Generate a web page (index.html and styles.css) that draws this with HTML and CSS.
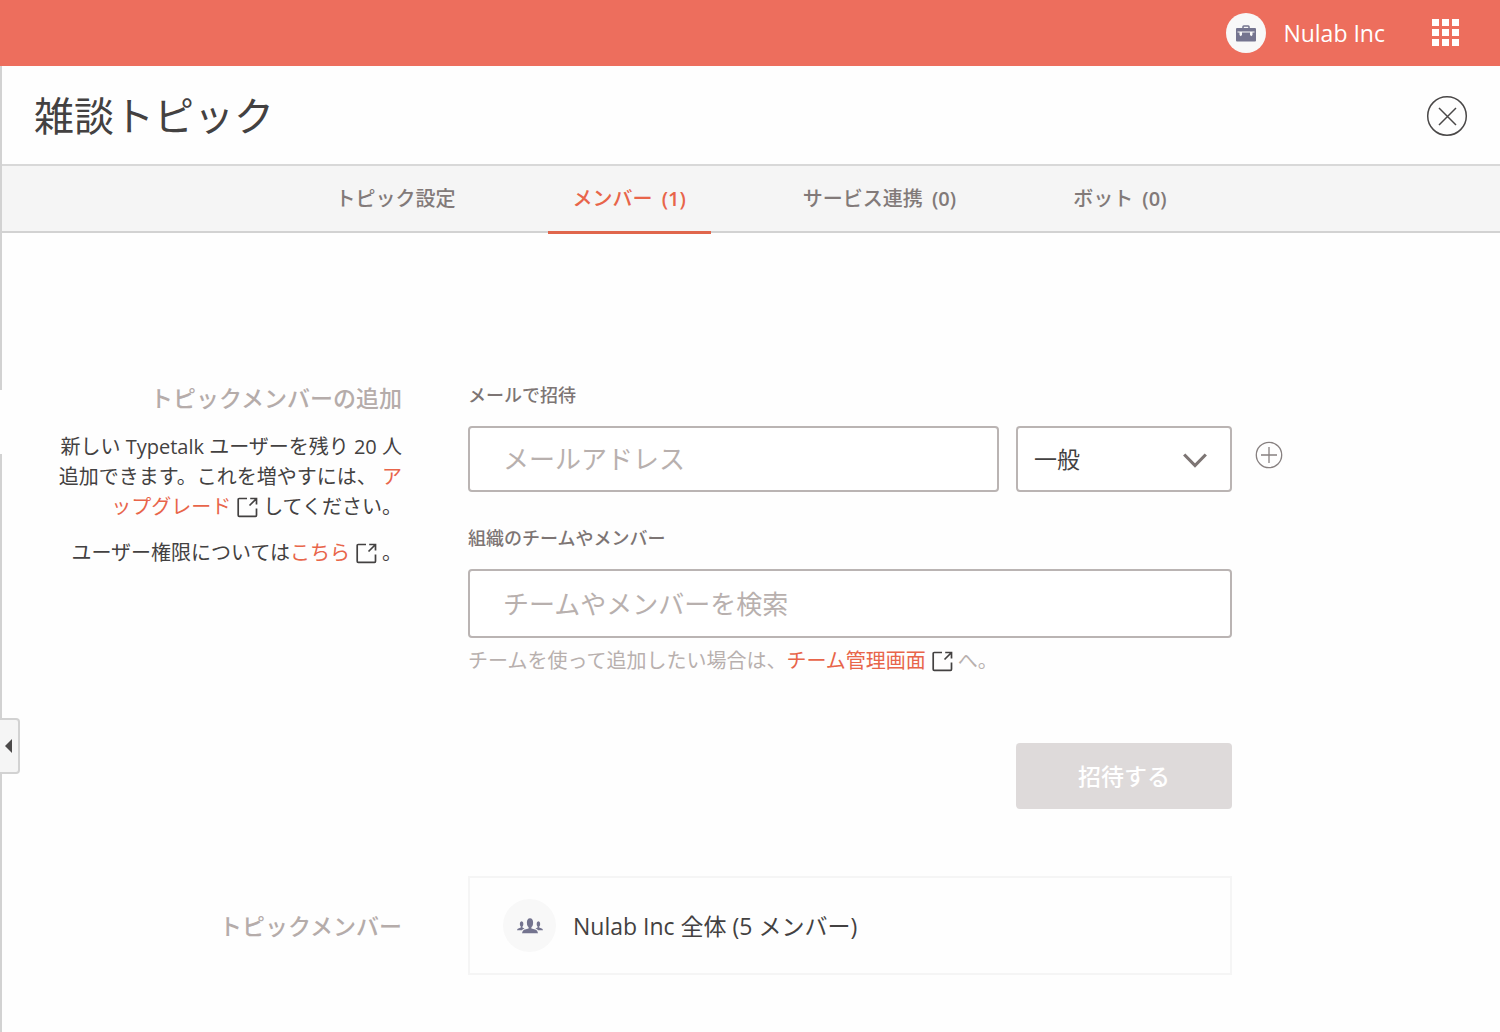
FILE: index.html
```html
<!DOCTYPE html>
<html lang="ja">
<head>
<meta charset="utf-8">
<meta name="viewport" content="width=device-width, initial-scale=1">
<title>雑談トピック</title>
<link rel="stylesheet" href="styles.css">
</head>
<body>
<svg class="sprite" aria-hidden="true">
  <symbol id="external" viewBox="0 0 21 21">
    <path d="M10 1.500H2.200Q1.200 1.500 1.200 2.500V18.300Q1.200 19.300 2.200 19.300H18.500Q19.500 19.300 19.500 18.300V11.500M12.500 8.500L19 2M13.200 1.500H19.500V7.500" fill="none" stroke="currentColor" stroke-width="1.700"/>
  </symbol>
</svg>

<header class="topbar">
  <a class="org" href="#">
    <span class="org-avatar">
      <svg width="20" height="17" viewBox="0 0 20 17" aria-hidden="true">
        <path d="M7 4V1.800Q7 1 7.800 1H12.200Q13 1 13 1.800V4" fill="none" stroke="#74748f" stroke-width="1.500"/>
        <path d="M1 3H19Q20 3 20 4V15.500Q20 16.500 19 16.500H1Q0 16.500 0 15.500V4Q0 3 1 3Z" fill="#74748f"/>
        <path d="M1.500 6.500H18.500V7.600H16.500V10L15.300 11.200L14 10V7.600H6V10L4.700 11.200L3.500 10V7.600H1.500Z" fill="#f8f8f8"/>
      </svg>
    </span>
    <span>Nulab Inc</span>
  </a>
  <button class="icon-button" type="button" aria-label="アプリ">
    <svg width="28" height="28" viewBox="0 0 28 28" fill="#fff" aria-hidden="true">
      <path d="M0 0h7v7H0zM10 0h7v7h-7zM20 0h7v7h-7zM0 10h7v7H0zM10 10h7v7h-7zM20 10h7v7h-7zM0 20h7v7H0zM10 20h7v7h-7zM20 20h7v7h-7z"/>
    </svg>
  </button>
</header>

<div class="workspace">
  <div class="rail">
    <span class="rail-upper"></span>
    <span class="rail-lower"></span>
    <button class="rail-handle" type="button" aria-label="サイドバーを開く">
      <svg width="7" height="14" viewBox="0 0 7 14" aria-hidden="true"><path d="M7 0V14L0 7Z" fill="#4c4a4a"/></svg>
    </button>
  </div>

  <div class="panel">
    <div class="title-bar">
      <h1>雑談トピック</h1>
      <button class="icon-button" type="button" aria-label="閉じる">
        <svg width="42" height="42" viewBox="0 0 42 42" fill="none" stroke="#4a4848" stroke-width="1.500" aria-hidden="true">
          <circle cx="21" cy="21" r="19.300"/>
          <path d="M13 13L30 30M30 13L13 30"/>
        </svg>
      </button>
    </div>

    <nav class="tabs">
      <a href="#">トピック設定</a>
      <a href="#" class="active" aria-current="page">メンバー <span class="count">(1)</span></a>
      <a href="#">サービス連携 <span class="count">(0)</span></a>
      <a href="#">ボット <span class="count">(0)</span></a>
    </nav>

    <main class="content">
      <section class="row">
        <div class="intro">
          <h2>トピックメンバーの追加</h2>
          <p>新しい Typetalk ユーザーを残り 20 人追加できます。これを増やすには、 <a href="#">アップグレード</a><svg class="external"><use href="#external"/></svg>してください。</p>
          <p>ユーザー権限については<a href="#">こちら</a><svg class="external"><use href="#external"/></svg>。</p>
        </div>
        <form class="fields">
          <label class="wide" for="email">メールで招待</label>
          <input id="email" type="email" placeholder="メールアドレス">
          <div class="select">
            <select aria-label="権限"><option>一般</option></select>
            <svg width="24" height="16" viewBox="0 0 24 16" aria-hidden="true"><path d="M1.200 1.500L12 12.500L22.800 1.500" fill="none" stroke="#7d7574" stroke-width="3.200"/></svg>
          </div>
          <button class="icon-button add" type="button" aria-label="追加">
            <svg width="28" height="28" viewBox="0 0 28 28" fill="none" stroke="#878080" stroke-width="1.300" aria-hidden="true">
              <circle cx="14" cy="14" r="12.700"/>
              <path d="M14 6V22M6 14H22"/>
            </svg>
          </button>
          <label class="wide second" for="team">組織のチームやメンバー</label>
          <input id="team" class="wide" type="text" placeholder="チームやメンバーを検索">
          <p class="wide help">チームを使って追加したい場合は、<a href="#">チーム管理画面</a><svg class="external"><use href="#external"/></svg>へ。</p>
          <button class="submit" type="submit" disabled>招待する</button>
        </form>
      </section>

      <section class="row members">
        <h2>トピックメンバー</h2>
        <div class="fields">
          <div class="card wide">
            <span class="team-avatar">
              <svg width="26" height="16" viewBox="0 0 26 16" fill="#74748f" aria-hidden="true">
                <ellipse cx="13" cy="4.700" rx="3.100" ry="4.500"/>
                <path d="M11.600 8H14.400V10.500L19 11.800Q20.500 12.500 21 15.300H5Q5.500 12.500 7 11.800L11.600 10.500Z"/>
                <ellipse cx="4.600" cy="6" rx="1.800" ry="2.700"/>
                <path d="M3.800 8H5.400V9.600L7.500 10.400Q5.500 11.200 5 12.200H0Q.3 10.600 1.300 10.400L3.800 9.600Z"/>
                <ellipse cx="21.400" cy="6" rx="1.800" ry="2.700"/>
                <path d="M22.200 8H20.600V9.600L18.500 10.400Q20.500 11.200 21 12.200H26Q25.700 10.600 24.700 10.400L22.200 9.600Z"/>
              </svg>
            </span>
            <span>Nulab Inc 全体 (5 メンバー)</span>
          </div>
        </div>
      </section>
    </main>
  </div>
</div>
</body>
</html>
```

FILE: styles.css
```css
* { box-sizing: border-box; }

body {
  margin: 0;
  min-height: 100vh;
  display: flex;
  flex-direction: column;
  background: #fefefe;
  color: #434141;
  font: 20px/30px "Open Sans", "Noto Sans CJK JP", sans-serif;
}

h1, h2, p { margin: 0; }
a { color: #e8654a; text-decoration: none; }
input, select, button { font: inherit; color: inherit; }
svg { display: block; }
.sprite { display: none; }

.icon-button {
  padding: 0;
  border: 0;
  background: none;
  cursor: pointer;
}

.topbar {
  height: 66px;
  padding-right: 40px;
  display: flex;
  align-items: center;
  justify-content: flex-end;
  gap: 47px;
  background: #ed6e5d;
}
.org {
  display: flex;
  align-items: center;
  gap: 17px;
  color: #fff;
  font-size: 23px;
}
.org-avatar {
  width: 40px;
  height: 40px;
  border-radius: 50%;
  display: grid;
  place-items: center;
  background: #f8f8f8;
}

.workspace { flex: 1; display: flex; }

.rail {
  position: relative;
  width: 2px;
  display: flex;
  flex-direction: column;
  gap: 64px;
}
.rail span { background: #d2d2d2; }
.rail-upper { height: 324px; }
.rail-lower { flex: 1; }
.rail-handle {
  position: absolute;
  top: 652px;
  left: 0;
  width: 20px;
  height: 56px;
  padding: 0 0 0 5px;
  border: 2px solid #d2d2d2;
  border-left: 0;
  border-radius: 0 4px 4px 0;
  background: #f5f5f5;
}

.panel { flex: 1; min-width: 0; }

.title-bar {
  height: 98px;
  padding: 2px 32px 0;
  display: flex;
  align-items: center;
  justify-content: space-between;
}
h1 { font-size: 40px; line-height: 60px; font-weight: 400; }

.tabs {
  height: 69px;
  display: flex;
  justify-content: center;
  gap: 67px;
  border-top: 2px solid #d8d8d8;
  border-bottom: 2px solid #d2d2d2;
  background: #f5f5f5;
}
.tabs a {
  height: 68px;
  padding: 18px 25px 0;
  color: #827a79;
  font-weight: 500;
}
.tabs .active { color: #e8654a; border-bottom: 3px solid #e0664c; }
.count { margin-left: 4px; font-weight: 600; }

.content { padding: 150px 217px 57px 54px; }
.row {
  display: grid;
  grid-template-columns: 346px 1fr;
  column-gap: 66px;
}
.row h2 {
  color: #b5acaa;
  font-size: 23px;
  line-height: 30px;
  font-weight: 500;
  text-align: right;
}
.intro { text-align: right; }
.intro h2 { margin-bottom: 19px; }
.intro p + p { margin-top: 16px; }
.external {
  display: inline-block;
  width: 21px;
  height: 21px;
  margin: 0 5px 0 6px;
  vertical-align: -4px;
  color: #434141;
}

.fields {
  display: grid;
  grid-template-columns: 1fr 216px 34px;
  column-gap: 17px;
}
.fields label {
  margin-bottom: 19px;
  color: #7d7574;
  font-size: 18px;
  line-height: 24px;
  font-weight: 500;
}
.fields .wide { grid-column: 1 / 3; }
.fields .second { margin-top: 34px; }
.fields input, .fields select {
  width: 100%;
  height: 66px;
  border: 2px solid #bab4b3;
  border-radius: 4px;
  background: #fff;
}
.fields input { grid-column: 1; padding: 0 33px; font-size: 26px; }
.fields #team { height: 69px; }
input::placeholder { color: #b8b0ae; opacity: 1; }
.select { display: grid; align-items: center; }
.select > * { grid-area: 1 / 1; }
.select select { padding: 0 16px; font-size: 23px; appearance: none; }
.select svg { justify-self: end; margin: 4px 25px 0 0; pointer-events: none; }
.add { justify-self: end; align-self: start; margin-top: 15px; }
.help { margin-top: 8px; color: #b8b0ae; }
.submit {
  grid-column: 2;
  height: 66px;
  margin-top: 67px;
  border: 0;
  border-radius: 4px;
  background: #dedada;
  font-size: 23px;
  font-weight: 500;
}
.fields .submit { color: #fff; }

.members { margin-top: 67px; align-items: center; }
.card {
  height: 99px;
  padding: 0 33px;
  display: flex;
  align-items: center;
  gap: 17px;
  border: 2px solid #f5f5f5;
  font-size: 23px;
}
.team-avatar {
  width: 53px;
  height: 53px;
  border-radius: 50%;
  display: grid;
  place-items: center;
  background: #f8f8f8;
}
```
